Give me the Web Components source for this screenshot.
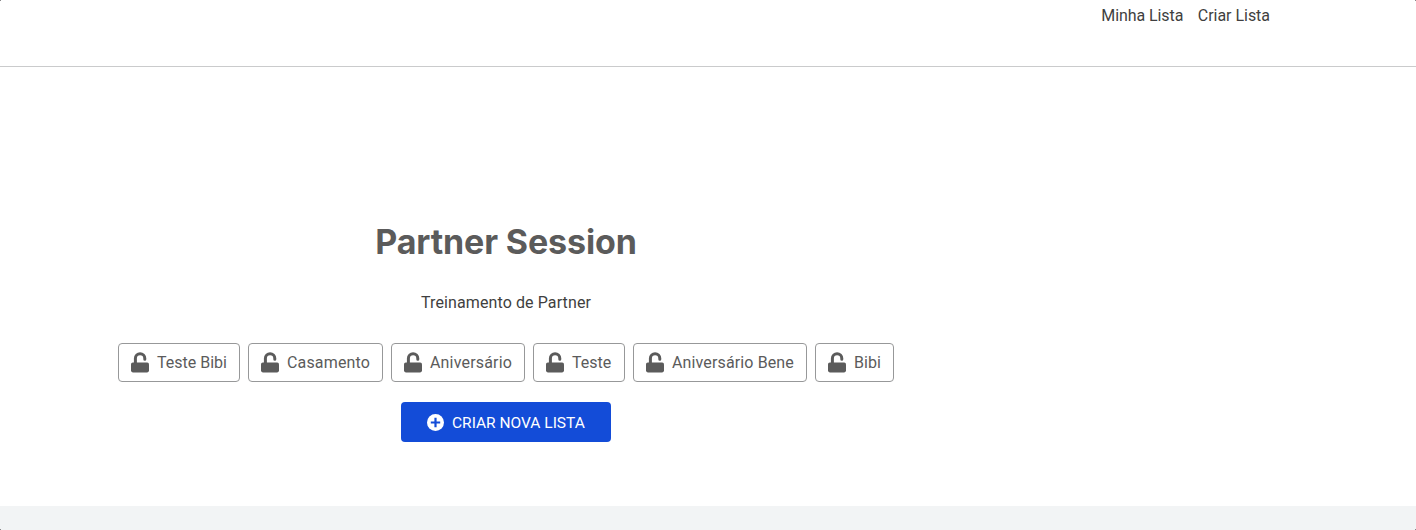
<!DOCTYPE html>
<html lang="pt-BR">
<head>
<meta charset="utf-8">
<title>Partner Session</title>
<style>
  html, body { margin: 0; height: 100%; overflow: hidden; background: #fff; }
  body { font: 16px/24px Roboto, "Liberation Sans", sans-serif; color: #3f3f40; }
</style>
</head>
<body>
<list-page>
  <site-header slot="header">
    <nav-link style="--tracking:-.08px">Minha Lista</nav-link>
    <nav-link style="--tracking:-.03px">Criar Lista</nav-link>
  </site-header>
  <list-hero>
    <span slot="title">Partner Session</span>
    <span slot="description">Treinamento de Partner</span>
    <list-chip slot="lists" style="--w:122px">Teste Bibi</list-chip>
    <list-chip slot="lists" style="--w:135px;--tracking:.16px">Casamento</list-chip>
    <list-chip slot="lists" style="--w:134px;--tracking:.17px">Aniversário</list-chip>
    <list-chip slot="lists" style="--w:92px">Teste</list-chip>
    <list-chip slot="lists" style="--w:174px;--tracking:.13px">Aniversário Bene</list-chip>
    <list-chip slot="lists" style="--w:79px;--tracking:.07px">Bibi</list-chip>
    <create-button slot="action">CRIAR NOVA LISTA</create-button>
  </list-hero>
</list-page>
<script>
const define = (name, html) => {
  const template = document.createElement('template');
  template.innerHTML = html;
  customElements.define(name, class extends HTMLElement {
    constructor() {
      super();
      this.attachShadow({ mode: 'open' }).append(template.content.cloneNode(true));
    }
  });
};

define('list-page', `
  <style>
    :host { display: flex; flex-direction: column; height: 530px; position: relative; }
    main { flex: 1; display: flex; }
    footer { height: 24px; background: #f2f4f5; }
    i { position: absolute; width: 1px; height: 1px; background: #88888a; }
    .t { top: 0; } .b { bottom: 0; } .l { left: 0; } .r { right: 0; }
  </style>
  <slot name="header"></slot>
  <main><slot></slot></main>
  <footer></footer>
  <i class="t l"></i><i class="t r"></i><i class="b l"></i><i class="b r"></i>`);

define('site-header', `
  <style>
    :host { display: block; box-sizing: border-box; height: 67px; padding: 4px 146px 0 0; border-bottom: 1px solid #cacbcc; }
    nav { display: flex; justify-content: flex-end; gap: 14.5px; }
  </style>
  <nav><slot></slot></nav>`);

define('nav-link', `
  <style>:host { display: block; letter-spacing: var(--tracking, 0); white-space: nowrap; }</style>
  <slot></slot>`);

define('list-hero', `
  <style>
    :host { display: flex; flex-direction: column; align-items: center; width: 776px; margin-left: 118px; padding-top: 155px; }
    h1 { margin: 0; font: 700 34px/40px Inter, sans-serif; letter-spacing: -.12px; color: #5b5b5b; white-space: nowrap; }
    p { margin: 29px 0 0; letter-spacing: .11px; }
    .lists { display: flex; gap: 8px; margin-top: 28px; }
    .action { margin-top: 20px; }
  </style>
  <h1><slot name="title"></slot></h1>
  <p><slot name="description"></slot></p>
  <div class="lists"><slot name="lists"></slot></div>
  <div class="action"><slot name="action"></slot></div>`);

define('list-chip', `
  <style>
    :host { display: flex; align-items: center; box-sizing: border-box; width: var(--w, auto); height: 39px;
      padding: 0 0 0 12px; gap: 8px; border: 1px solid #979899; border-radius: 4px; color: #5b5b5b;
      letter-spacing: var(--tracking, 0); white-space: nowrap; }
    svg { flex: none; display: block; }
  </style>
  <svg width="18" height="21" viewBox="0 0 18 21">
    <path d="M4.4 12V6.4a4.7 4.7 0 0 1 9.4 0v.8" fill="none" stroke="#5b5b5b" stroke-width="3" stroke-linecap="round"/>
    <rect y="10.4" width="18" height="10" rx="1.8" fill="#5b5b5b"/>
  </svg>
  <span><slot></slot></span>`);

define('create-button', `
  <style>
    :host { display: flex; align-items: center; box-sizing: border-box; width: 210px; height: 40px;
      padding-left: 26px; gap: 8px; border-radius: 4px; background: #134cd8; color: #fff;
      font-size: 15.5px; letter-spacing: 0; white-space: nowrap; }
    svg { flex: none; display: block; }
    span { padding-top: 1px; }
  </style>
  <svg width="17" height="17" viewBox="0 0 17 17">
    <circle cx="8.5" cy="8.5" r="8.5" fill="#fff"/>
    <path d="M8.5 3.8v9.4M3.8 8.5h9.4" stroke="#134cd8" stroke-width="2.2"/>
  </svg>
  <span><slot></slot></span>`);
</script>
</body>
</html>
